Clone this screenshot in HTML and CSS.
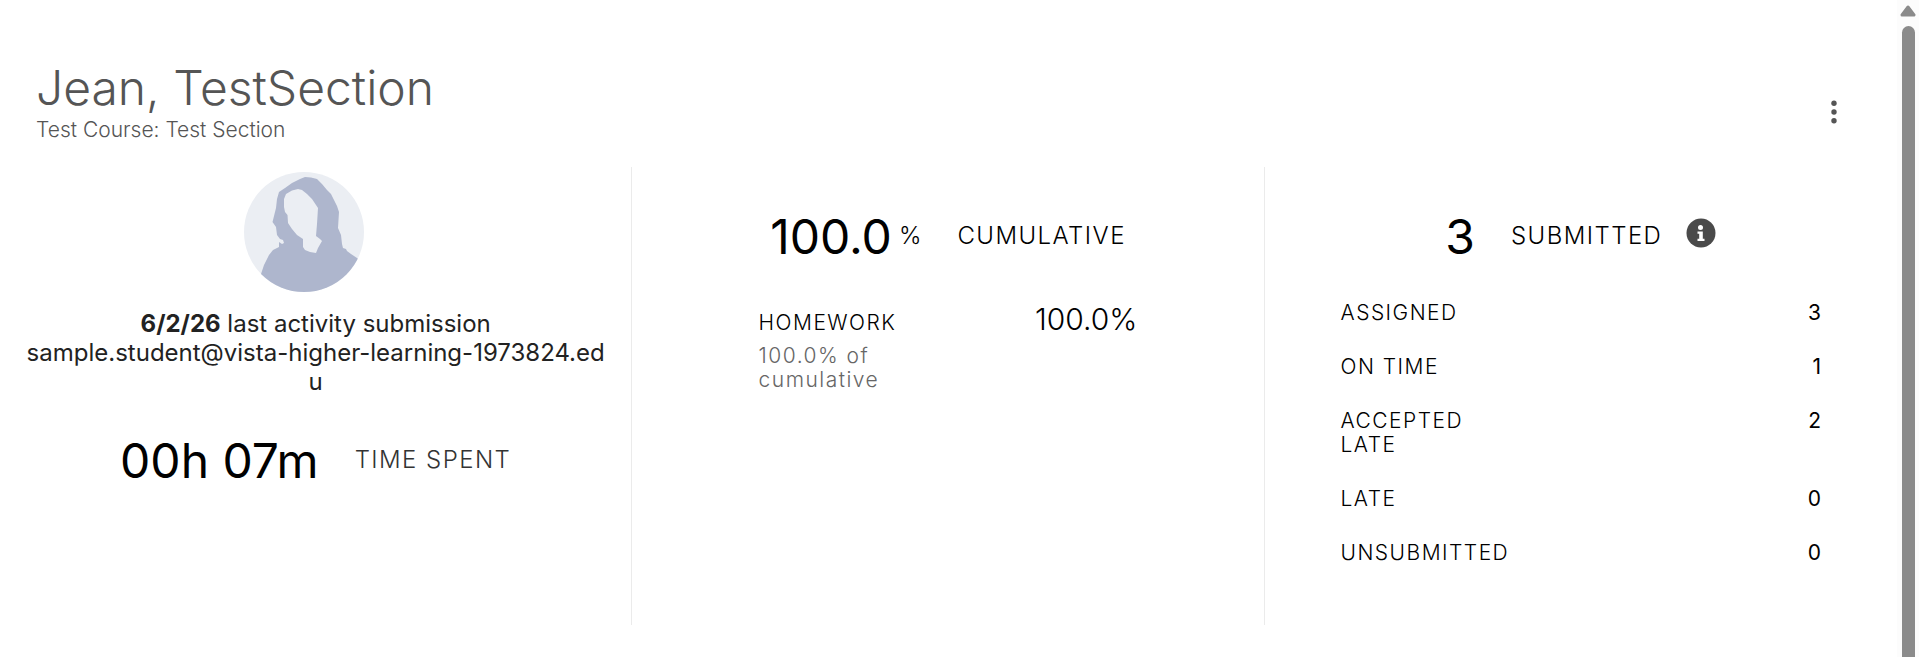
FILE: index.html
```html
<!DOCTYPE html>
<html lang="en">
<head>
  <meta charset="UTF-8">
  <title>Jean, TestSection</title>
  <link rel="stylesheet" href="styles.css">
</head>
<body>

  <main class="page">
    <header class="header">
      <div>
        <h1>Jean, TestSection</h1>
        <p class="course">Test Course: Test Section</p>
      </div>
      <button class="menu" type="button" aria-label="More options">
        <svg width="6" height="24" viewBox="0 0 6 24" fill="currentColor">
          <circle cx="3" cy="3.3" r="2.7"/>
          <circle cx="3" cy="12" r="2.7"/>
          <circle cx="3" cy="20.7" r="2.7"/>
        </svg>
      </button>
    </header>

    <div class="columns">
      <section class="column profile">
        <div class="photo">
          <svg class="avatar" viewBox="0 0 120 120" role="img" aria-label="Student">
            <defs>
              <clipPath id="round"><circle cx="60" cy="60" r="60"/></clipPath>
            </defs>
            <g clip-path="url(#round)">
              <rect width="120" height="120" fill="#ebeef3"/>
              <path fill="#aeb6cd" d="M61 5 L56 7 L48 11 L41 16 L35 20 L33 27 L32 36 L30 44 L28.500 50 L32 55 L33 63 L36 67 L39 68 L40 71 L38 72 L35 70 L35 75 L29 78 L25 83 L20 93 L17 102 L14 122 L106 122 L118 90 L113 86 L107 82 L103 79 L102 77 L99 76 L98 72 L97 63 L94 56 L94.500 48 L95 40 L93 34 L90 28 L87 22 L83 18 L78 12 L73 7 L67 5.500 Z"/>
              <path fill="#ebeef3" d="M54 17 L48 18.500 L42 22 L40 27 L40 35 L41 40 L43.500 43 L44 51 L48 57 L53 63 L59 67 L59 75 L61 78 L66 80 L72 81 L74 76 L78 69 L76 67 L72 64 L73 52 L74 36 L72 33 L68 27 L63 22 L58 18 Z"/>
            </g>
          </svg>
        </div>
        <p class="info"><strong>6/2/26</strong> last activity submission</p>
        <p class="info email">sample.student@vista-higher-learning-1973824.edu</p>
        <div class="headline">
          <span class="big">00h 07m</span>
          <span class="label muted">TIME SPENT</span>
        </div>
      </section>

      <section class="column">
        <div class="headline">
          <span class="big">100.0</span>
          <span class="percent">%</span>
          <h2 class="label">CUMULATIVE</h2>
        </div>
        <div class="grades">
          <div class="category">
            <h3>HOMEWORK</h3>
            <p class="weight">100.0% of cumulative</p>
          </div>
          <span class="score">100.0%</span>
        </div>
      </section>

      <section class="column">
        <div class="headline">
          <span class="big">3</span>
          <h2 class="label">SUBMITTED</h2>
          <button class="tip" type="button" aria-label="About submissions">
            <svg width="30" height="30" viewBox="0 0 30 30">
              <circle cx="15" cy="15" r="14.5" fill="#4a4a4a"/>
              <circle cx="14.5" cy="9.500" r="2.500" fill="#fff"/>
              <path fill="#fff" d="M11.500 13.500h5.300v7.200h1.700v2.300h-7v-2.300h1.700v-4.900h-1.700z"/>
            </svg>
          </button>
        </div>
        <dl class="counts">
          <div><dt>ASSIGNED</dt><dd>3</dd></div>
          <div><dt>ON TIME</dt><dd>1</dd></div>
          <div><dt>ACCEPTED LATE</dt><dd>2</dd></div>
          <div><dt>LATE</dt><dd>0</dd></div>
          <div><dt>UNSUBMITTED</dt><dd>0</dd></div>
        </dl>
      </section>
    </div>
  </main>

  <div class="scrollbar" aria-hidden="true">
    <svg width="16" height="12" viewBox="0 0 16 12">
      <path d="M8 2 L14 10 H2 Z" fill="#8b8b8b" stroke="#8b8b8b" stroke-width="3" stroke-linejoin="round"/>
    </svg>
    <div class="thumb"></div>
  </div>

</body>
</html>
```

FILE: styles.css
```css
* {
  box-sizing: border-box;
}

body {
  display: flex;
  height: 100vh;
  margin: 0;
  overflow: hidden;
  background: #fff;
  color: #000;
  font-family: Inter, sans-serif;
  font-size: 24px;
  line-height: 1.2;
}

h1, h2, h3, p, dl, dd {
  margin: 0;
  font-weight: 300;
}

button {
  display: flex;
  padding: 0;
  border: none;
  background: none;
  color: #555;
  cursor: pointer;
}

.page {
  flex: 1;
  padding-top: 59px;
}

.header {
  display: flex;
  align-items: center;
  justify-content: space-between;
  padding: 0 60px 0 36px;
  color: #555;
}

.menu {
  padding-top: 22px;
}

h1 {
  font-size: 48px;
  line-height: 58px;
}

.course {
  font-size: 21px;
  line-height: 26px;
}

.columns {
  display: grid;
  grid-template-columns: repeat(3, 1fr);
  margin-top: 24px;
}

.column {
  min-height: 458px;
  padding-top: 41px;
  border-right: 1px solid #ebebeb;
}

.column:last-child {
  border-right: none;
}

.headline {
  display: flex;
  align-items: center;
  justify-content: center;
}

.big {
  font-size: 48px;
  line-height: 58px;
}

.label {
  margin-left: 36px;
  padding-bottom: 2px;
  font-size: 24px;
  letter-spacing: 0.06em;
}

.muted {
  color: #333;
  font-weight: 300;
}

.percent {
  margin-left: 7px;
  padding-bottom: 2px;
  font-weight: 300;
}

/* student */

.profile {
  padding: 5px 24px 0;
  text-align: center;
}

.photo {
  padding-right: 24px;
}

.avatar {
  display: block;
  width: 120px;
  height: 120px;
  margin: 0 auto 18px;
}

.info {
  color: #222;
  font-weight: 400;
}

.email {
  word-break: break-all;
}

.profile .headline {
  margin-top: 36px;
}

/* grades */

.grades {
  display: flex;
  align-items: baseline;
  justify-content: space-between;
  width: 60%;
  margin: 35px auto 0;
}

.category {
  width: 50%;
}

h3, .weight, .counts {
  font-size: 21px;
  line-height: 24px;
  letter-spacing: 0.07em;
}

.weight {
  margin-top: 9px;
  color: #666;
}

.score {
  font-size: 30px;
  line-height: 36px;
  font-weight: 300;
}

/* submissions */

.tip {
  margin-left: 24px;
  padding-bottom: 8px;
}

.counts {
  width: 76%;
  margin: 35px auto 0;
}

.counts div {
  display: flex;
  justify-content: space-between;
  margin-bottom: 30px;
}

.counts dt {
  max-width: 35%;
  font-weight: 300;
}

.counts dd {
  font-weight: 400;
  letter-spacing: 0;
}

.scrollbar {
  display: flex;
  flex-direction: column;
  align-items: center;
  gap: 9px;
  width: 22px;
  padding-top: 5px;
  background: #fcfcfc;
}

.thumb {
  flex: 1;
  width: 13px;
  border-radius: 7px 7px 0 0;
  background: #8b8b8b;
}
```
